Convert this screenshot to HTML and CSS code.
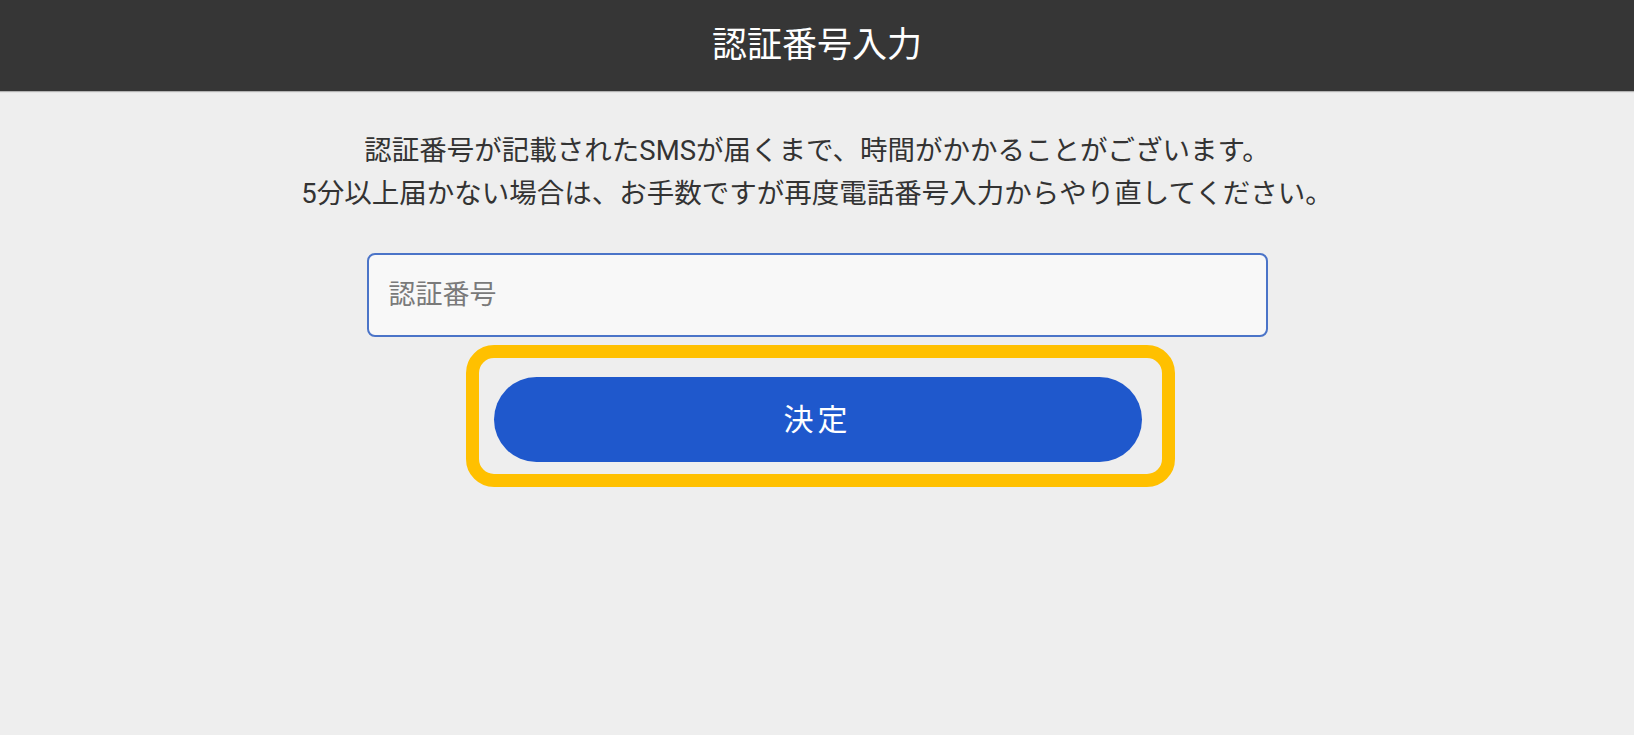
FILE: index.html
```html
<!DOCTYPE html>
<html lang="ja">
<head>
  <meta charset="UTF-8">
  <meta name="viewport" content="width=device-width, initial-scale=1.0">
  <title>認証番号入力</title>
  <link rel="stylesheet" href="styles.css">
</head>
<body>
  <header class="app-bar">
    <h1 class="app-title">認証番号入力</h1>
  </header>
  <main class="content">
    <p class="notice">
      認証番号が記載されたSMSが届くまで、時間がかかることがございます。<br>
      5分以上届かない場合は、お手数ですが再度電話番号入力からやり直してください。
    </p>
    <form class="code-form" onsubmit="return false;">
      <input class="code-input" type="tel" name="code" placeholder="認証番号">
      <div class="highlight">
        <button class="submit-btn" type="submit">決定</button>
      </div>
    </form>
  </main>
</body>
</html>
```

FILE: styles.css
```css
body {
  margin: 0;
  padding: 0;
  background: #eeeeee;
  font-family: Roboto, "Noto Sans CJK JP", sans-serif;
  color: #333;
}

.app-bar {
  height: 91px;
  background-color: #363636;
  display: flex;
  align-items: center;
  justify-content: center;
  box-shadow: 0 1px 1px rgba(0, 0, 0, 0.25);
}

.app-title {
  margin: 0;
  color: #fff;
  font-size: 35px;
  font-weight: 400;
  line-height: 1;
}

.content {
  display: flex;
  flex-direction: column;
  align-items: center;
  padding-top: 38px;
}

.notice {
  margin: 0;
  text-align: center;
  font-size: 27.5px;
  line-height: 43px;
  color: #333;
}

.code-form {
  display: flex;
  flex-direction: column;
  align-items: center;
  margin-top: 38px;
}

.code-input {
  width: 901px;
  height: 84px;
  box-sizing: border-box;
  padding: 0 20px;
  border: 2px solid #4b74c8;
  border-radius: 8px;
  background: #f8f8f8;
  font-family: Roboto, "Noto Sans CJK JP", sans-serif;
  font-size: 27px;
  color: #333;
  outline: none;
}

.code-input::placeholder {
  color: #7a7a7a;
}

.highlight {
  margin-top: 8px;
  margin-left: 6px;
  padding: 19px 20px 12px 15px;
  border: 13px solid #ffc000;
  border-radius: 28px;
}

.submit-btn {
  display: block;
  width: 648px;
  height: 85px;
  padding: 0 0 6px;
  border: none;
  border-radius: 43px;
  background-color: #1f58cc;
  color: #fff;
  font-family: Roboto, "Noto Sans CJK JP", sans-serif;
  font-size: 30px;
  letter-spacing: 4px;
  cursor: pointer;
}
```
